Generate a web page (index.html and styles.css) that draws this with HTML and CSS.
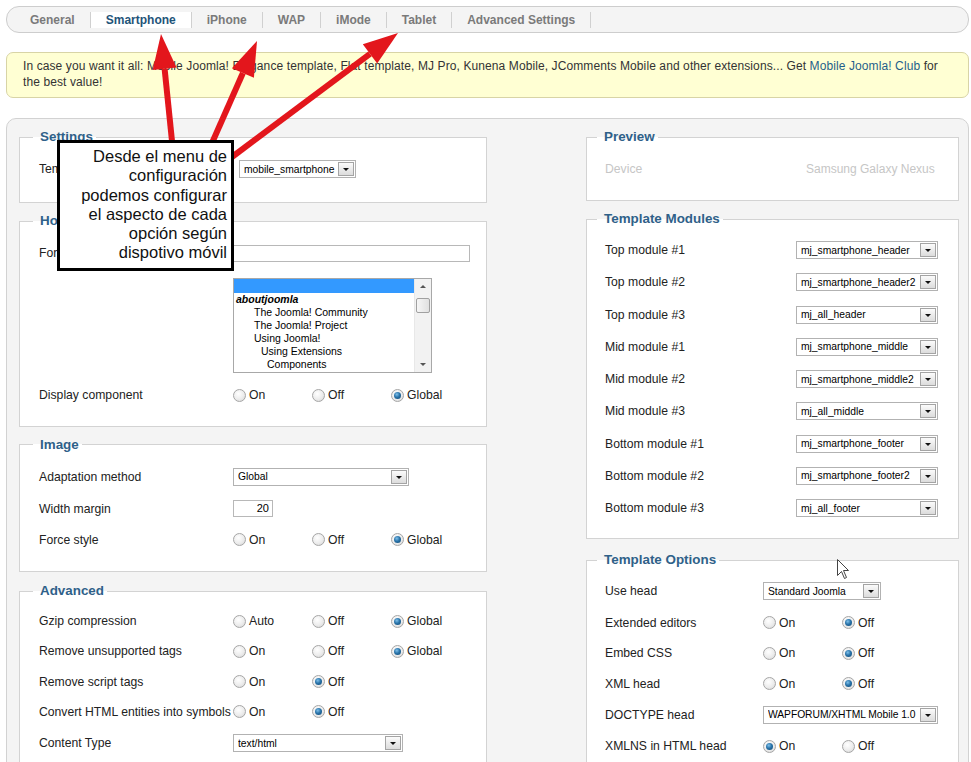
FILE: index.html
```html
<!DOCTYPE html>
<html lang="en">
<head>
<meta charset="utf-8">
<title>Mobile Joomla - Smartphone</title>
<link rel="stylesheet" href="styles.css">
</head>
<body>
<div class="page">
  <div class="tabs">
    <span class="tab">General</span>
    <span class="tab on">Smartphone</span>
    <span class="tab">iPhone</span>
    <span class="tab">WAP</span>
    <span class="tab">iMode</span>
    <span class="tab">Tablet</span>
    <span class="tab">Advanced Settings</span>
  </div>

  <div class="notice">In case you want it all: Mobile Joomla! Elegance template, Flat template, MJ Pro, Kunena Mobile, JComments Mobile and other extensions... Get <a>Mobile Joomla! Club</a> for the best value!</div>

  <div class="panel">
    <div class="col left">
      <fieldset class="set">
        <legend>Settings</legend>
        <div class="row"><span class="lbl">Template</span><span class="sel w117"><span class="t">mobile_smartphone</span><i class="dd"></i></span></div>
      </fieldset>

      <fieldset class="home">
        <legend>Homepage</legend>
        <div class="row"><span class="lbl">Forced homepage</span><span class="inp"></span></div>
        <div class="list">
          <div class="items">
            <div class="it hl"></div>
            <div class="it grp">aboutjoomla</div>
            <div class="it i1">The Joomla! Community</div>
            <div class="it i1">The Joomla! Project</div>
            <div class="it i1">Using Joomla!</div>
            <div class="it i2">Using Extensions</div>
            <div class="it i3">Components</div>
          </div>
          <div class="sb">
            <span class="ar up"></span>
            <span class="track"><span class="thumb"></span></span>
            <span class="ar dn"></span>
          </div>
        </div>
        <div class="row r"><span class="lbl">Display component</span><span class="opt"><i class="rd"></i>On</span><span class="opt"><i class="rd"></i>Off</span><span class="opt"><i class="rd on"></i>Global</span></div>
      </fieldset>

      <fieldset class="img">
        <legend>Image</legend>
        <div class="row"><span class="lbl">Adaptation method</span><span class="sel w176"><span class="t">Global</span><i class="dd"></i></span></div>
        <div class="row"><span class="lbl">Width margin</span><span class="num">20</span></div>
        <div class="row r"><span class="lbl">Force style</span><span class="opt"><i class="rd"></i>On</span><span class="opt"><i class="rd"></i>Off</span><span class="opt"><i class="rd on"></i>Global</span></div>
      </fieldset>

      <fieldset class="adv">
        <legend>Advanced</legend>
        <div class="row r"><span class="lbl">Gzip compression</span><span class="opt"><i class="rd"></i>Auto</span><span class="opt"><i class="rd"></i>Off</span><span class="opt"><i class="rd on"></i>Global</span></div>
        <div class="row r"><span class="lbl">Remove unsupported tags</span><span class="opt"><i class="rd"></i>On</span><span class="opt"><i class="rd"></i>Off</span><span class="opt"><i class="rd on"></i>Global</span></div>
        <div class="row r"><span class="lbl">Remove script tags</span><span class="opt"><i class="rd"></i>On</span><span class="opt"><i class="rd on"></i>Off</span></div>
        <div class="row r"><span class="lbl">Convert HTML entities into symbols</span><span class="opt"><i class="rd"></i>On</span><span class="opt"><i class="rd on"></i>Off</span></div>
        <div class="row"><span class="lbl">Content Type</span><span class="sel w170"><span class="t">text/html</span><i class="dd"></i></span></div>
      </fieldset>
    </div>

    <div class="col right">
      <fieldset class="prev">
        <legend>Preview</legend>
        <div class="row"><span class="lbl">Device</span><span class="val">Samsung Galaxy Nexus</span></div>
      </fieldset>

      <fieldset class="mods">
        <legend>Template Modules</legend>
        <div class="row"><span class="lbl">Top module #1</span><span class="sel w142"><span class="t">mj_smartphone_header</span><i class="dd"></i></span></div>
        <div class="row"><span class="lbl">Top module #2</span><span class="sel w142"><span class="t">mj_smartphone_header2</span><i class="dd"></i></span></div>
        <div class="row"><span class="lbl">Top module #3</span><span class="sel w142"><span class="t">mj_all_header</span><i class="dd"></i></span></div>
        <div class="row"><span class="lbl">Mid module #1</span><span class="sel w142"><span class="t">mj_smartphone_middle</span><i class="dd"></i></span></div>
        <div class="row"><span class="lbl">Mid module #2</span><span class="sel w142"><span class="t">mj_smartphone_middle2</span><i class="dd"></i></span></div>
        <div class="row"><span class="lbl">Mid module #3</span><span class="sel w142"><span class="t">mj_all_middle</span><i class="dd"></i></span></div>
        <div class="row"><span class="lbl">Bottom module #1</span><span class="sel w142"><span class="t">mj_smartphone_footer</span><i class="dd"></i></span></div>
        <div class="row"><span class="lbl">Bottom module #2</span><span class="sel w142"><span class="t">mj_smartphone_footer2</span><i class="dd"></i></span></div>
        <div class="row"><span class="lbl">Bottom module #3</span><span class="sel w142"><span class="t">mj_all_footer</span><i class="dd"></i></span></div>
      </fieldset>

      <fieldset class="opts">
        <legend>Template Options</legend>
        <div class="row"><span class="lbl">Use head</span><span class="sel w118"><span class="t">Standard Joomla</span><i class="dd"></i></span></div>
        <div class="row r"><span class="lbl">Extended editors</span><span class="opt"><i class="rd"></i>On</span><span class="opt"><i class="rd on"></i>Off</span></div>
        <div class="row r"><span class="lbl">Embed CSS</span><span class="opt"><i class="rd"></i>On</span><span class="opt"><i class="rd on"></i>Off</span></div>
        <div class="row r"><span class="lbl">XML head</span><span class="opt"><i class="rd"></i>On</span><span class="opt"><i class="rd on"></i>Off</span></div>
        <div class="row"><span class="lbl">DOCTYPE head</span><span class="sel w175 tight"><span class="t">WAPFORUM/XHTML Mobile 1.0</span><i class="dd"></i></span></div>
        <div class="row r"><span class="lbl">XMLNS in HTML head</span><span class="opt"><i class="rd on"></i>On</span><span class="opt"><i class="rd"></i>Off</span></div>
      </fieldset>
    </div>
  </div>
</div>

<svg class="arrows" width="971" height="762" viewBox="0 0 971 762" aria-hidden="true">
  <g stroke="#e3161c" stroke-width="6" fill="none">
    <line x1="172" y1="141" x2="164.6" y2="68.8"/>
    <line x1="212" y1="143" x2="242.9" y2="73"/>
    <line x1="232" y1="157" x2="370" y2="53.9"/>
  </g>
  <g fill="#e3161c">
    <polygon points="161,34 176.5,67.6 152.7,70"/>
    <polygon points="257,41 253.9,77.8 231.9,68.2"/>
    <polygon points="398,33 377.2,63.5 362.8,44.3"/>
  </g>
</svg>

<div class="callout">Desde el menu de<br>configuración<br>podemos configurar<br>el aspecto de cada<br>opción según<br>dispotivo móvil</div>

<svg class="cursor" width="13" height="21" viewBox="0 0 13 21" aria-hidden="true">
  <path d="M0.5 0.5 L0.5 16.5 L4.5 12.5 L7.5 19.5 L9.5 18.5 L6.5 11.5 L11.5 11.5 Z" fill="#fff" stroke="#444" stroke-width="1"/>
</svg>
</body>
</html>
```

FILE: styles.css
```css
* { box-sizing: border-box; }
html, body { margin: 0; padding: 0; background: #fff; }
body {
  font-family: "Liberation Sans", Arial, sans-serif;
  font-size: 12px;
  color: #222;
}
.page { padding: 6px 2px 0 6px; width: 971px; }

/* tabs */
.tabs {
  display: flex;
  align-items: center;
  width: 963px;
  height: 27px;
  padding-left: 8px;
  border: 1px solid #cdcdcd;
  border-radius: 13px;
  background: #f4f4f4;
}
.tab {
  padding: 0 15px;
  border-right: 1px solid #d0d0d0;
  font-weight: bold;
  font-size: 12px;
  line-height: 16px;
  color: #7a7a7a;
}
.tab.on { background: #fff; color: #1f5479; }

/* notice */
.notice {
  width: 963px;
  margin-top: 19px;
  padding: 5px 16px 7px 16px;
  border: 1px solid #d8d4a6;
  border-radius: 7px;
  background: #ffffd3;
  line-height: 16px;
  font-size: 12px;
  letter-spacing: 0.1px;
  color: #333;
}
.notice a { color: #1f5f8b; text-decoration: none; }

/* main panel */
.panel {
  width: 963px;
  margin-top: 20px;
  padding: 10px 9px 20px 12px;
  border: 1px solid #d2d2d2;
  border-radius: 10px;
  background: #f4f4f4;
  display: grid;
  grid-template-columns: 468px 373px;
  column-gap: 99px;
  align-items: start;
}
fieldset {
  margin: 0 0 10px;
  min-width: 0;
  padding: 8px 18px 15px 19px;
  border: 1px solid #d3d3d3;
  background: #fff;
}
.right fieldset { padding-left: 18px; }
legend {
  margin-left: -6px;
  padding: 0 3px 0 7px;
  font-weight: bold;
  font-size: 13.4px;
  line-height: 16px;
  color: #2f6189;
}
.right legend { margin-left: -8px; }
.set { padding-bottom: 17px; }
.img { padding-bottom: 16px; margin-bottom: 11px; }
.adv { padding-top: 7px; }
.prev { padding-bottom: 15px; }
.mods { padding-top: 7px; padding-bottom: 14px; margin-bottom: 13px; }
.opts { padding-top: 7px; }

/* rows */
.row {
  display: flex;
  align-items: center;
  height: 32px;
  white-space: nowrap;
}
.row.r { height: 30.5px; }
.adv .row.r { height: 30.25px; }
.mods .row { height: 32.25px; }
.lbl { flex: none; width: 194px; font-size: 12.2px; color: #222; }
.set .lbl { width: 200px; }
.prev .lbl { width: 201px; }
.mods .lbl { width: 191px; }
.opts .lbl { width: 158px; }
.prev .lbl, .val { color: #c6c6c6; }

/* radios */
.opt {
  flex: none;
  width: 79px;
  display: flex;
  align-items: center;
  font-size: 12.2px;
  color: #222;
}
.rd {
  position: relative;
  flex: none;
  width: 13px;
  height: 13px;
  margin-right: 3px;
  border: 1px solid #a6a6a6;
  border-radius: 50%;
  background: radial-gradient(circle at 40% 35%, #ffffff 0, #ececec 55%, #d2d2d2 100%);
}
.rd.on::after {
  content: "";
  position: absolute;
  left: 2px;
  top: 2px;
  width: 7px;
  height: 7px;
  border-radius: 50%;
  background: radial-gradient(circle at 40% 35%, #7fc0ea 0, #2a74aa 45%, #0c4570 100%);
}

/* selects */
.sel {
  flex: none;
  display: flex;
  align-items: center;
  height: 18px;
  padding-left: 4px;
  border: 1px solid #b2b2b2;
  background: #fff;
  font-size: 10.3px;
  color: #000;
  white-space: nowrap;
  overflow: hidden;
}
.sel.tight { letter-spacing: -0.05px; }
.sel .t { flex: 1; overflow: hidden; }
.dd {
  position: relative;
  flex: none;
  width: 16px;
  height: 14px;
  margin: 0 1px 0 1px;
  border: 1px solid #a4a4a4;
  background: linear-gradient(#fbfbfb, #dcdcdc);
}
.dd::after {
  content: "";
  position: absolute;
  left: 4px;
  top: 5px;
  border-left: 3px solid transparent;
  border-right: 3px solid transparent;
  border-top: 3px solid #111;
}
.w117 { width: 117px; }
.w118 { width: 118px; }
.w142 { width: 142px; }
.w170 { width: 170px; }
.w175 { width: 175px; }
.w176 { width: 176px; }

/* text inputs */
.inp {
  flex: none;
  width: 237px;
  height: 17px;
  border: 1px solid #b8b8b8;
  background: #fff;
}
.num {
  flex: none;
  width: 40px;
  height: 17px;
  padding-right: 3px;
  border: 1px solid #b8b8b8;
  background: #fff;
  font-size: 11px;
  line-height: 15px;
  text-align: right;
  color: #000;
}

/* listbox */
.list {
  display: flex;
  width: 199px;
  height: 95px;
  margin: 9px 0 7px 194px;
  border: 1px solid #a8a8a8;
  background: #fff;
  overflow: hidden;
}
.items { flex: 1; font-size: 10.5px; color: #000; }
.it { height: 13px; line-height: 13px; white-space: nowrap; }
.it.hl { height: 14px; background: #3399ff; }
.it.grp { padding-left: 2px; font-weight: bold; font-style: italic; }
.it.i1 { padding-left: 20px; }
.it.i2 { padding-left: 27px; }
.it.i3 { padding-left: 33px; }
.sb {
  flex: none;
  width: 17px;
  display: flex;
  flex-direction: column;
  align-items: center;
  background: #f2f2f2;
  border-left: 1px solid #e8e8e8;
}
.ar { position: relative; width: 15px; height: 15px; flex: none; }
.ar::after {
  content: "";
  position: absolute;
  left: 4px;
  border-left: 3px solid transparent;
  border-right: 3px solid transparent;
}
.ar.up::after { top: 6px; border-bottom: 3px solid #555; }
.ar.dn::after { top: 6px; border-top: 3px solid #555; }
.track { flex: 1; width: 15px; }
.thumb {
  display: block;
  width: 14px;
  height: 15px;
  margin: 4px auto 0;
  border: 1px solid #a0a0a0;
  border-radius: 2px;
  background: linear-gradient(90deg, #f6f6f6, #e0e0e0);
}

/* overlays */
.arrows {
  position: absolute;
  left: 0;
  top: 0;
  z-index: 5;
  pointer-events: none;
}
.callout {
  position: absolute;
  left: 57px;
  top: 140px;
  z-index: 6;
  width: 177px;
  height: 131px;
  padding: 4px 4px 0 4px;
  border: 3px solid #000;
  background: #fff;
  text-align: right;
  font-family: "Liberation Sans", Arial, sans-serif;
  font-size: 16.5px;
  line-height: 19.3px;
  color: #111;
}
.cursor {
  position: absolute;
  left: 837px;
  top: 559px;
  z-index: 7;
}
```
